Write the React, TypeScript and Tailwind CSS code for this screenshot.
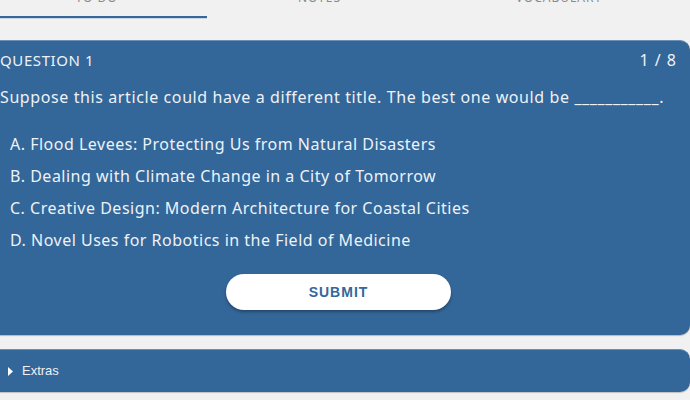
import React from "react";

const options = [
  "A. Flood Levees: Protecting Us from Natural Disasters",
  "B. Dealing with Climate Change in a City of Tomorrow",
  "C. Creative Design: Modern Architecture for Coastal Cities",
  "D. Novel Uses for Robotics in the Field of Medicine",
];

const tabs = [
  { label: "TO DO", w: "w-[223px]" },
  { label: "NOTES", w: "w-[223px]" },
  { label: "VOCABULARY", w: "w-[256px]" },
];

export default function App() {
  return (
    <div
      className="w-[690px] h-[400px] overflow-hidden bg-[#f1f1f1]"
      style={{ fontFamily: '"Noto Sans", "Open Sans", sans-serif' }}
    >
      {/* tab strip, scrolled partly out of view */}
      <div className="flex -mt-[10px] -ml-[15px]">
        {tabs.map((t, i) => (
          <div key={t.label} className={`${t.w} flex flex-col`}>
            <div className="h-[26px] text-center text-[12px] leading-[16px] tracking-[1px] text-[#8a8a8a]">
              {t.label}
            </div>
            <div
              className={
                i === 0
                  ? "ml-[15px] w-[207px] h-[2px] bg-[#3a6799] shadow-[0_1px_0_#c9d6e4]"
                  : "h-[2px]"
              }
            />
          </div>
        ))}
      </div>

      {/* question card */}
      <div className="mt-[22px] -ml-[13px] w-[703px] rounded-[10px] bg-[#336699] border-t border-[#6a8fb6] px-[13px] pt-[9px] pb-[25px] text-[#eef2f7] shadow-[0_1px_1px_rgba(0,0,0,0.25)]">
        <div className="flex justify-between text-[15px] leading-[20px]">
          <span className="tracking-[0.6px]">QUESTION 1</span>
          <span className="tracking-[1px] text-[16px]">1 / 8</span>
        </div>
        <div className="mt-[15px] text-[16px] leading-[24px] tracking-[0.6px]">
          Suppose this article could have a different title. The best one would be{" "}
          <span>___________</span>.
        </div>
        <div className="mt-[19px] pl-[10px] flex flex-col">
          {options.map((o) => (
            <div key={o} className="h-[32px] leading-[32px] text-[16px] tracking-[0.5px]">
              {o}
            </div>
          ))}
        </div>
        <div className="mt-[18px] flex justify-center">
          <button
            className="w-[225px] h-[36px] rounded-full bg-white text-[#34679a] text-[14px] font-bold tracking-[1px] shadow-[0_2px_3px_rgba(0,0,0,0.3)]"
            style={{ fontFamily: '"Liberation Sans", Arial, sans-serif' }}
          >
            SUBMIT
          </button>
        </div>
      </div>

      {/* collapsible extras */}
      <div className="mt-[14px] -ml-[13px] w-[703px] h-[43px] rounded-[10px] bg-[#336699] border-t border-[#6a8fb6] shadow-[0_1px_1px_rgba(0,0,0,0.2)] flex items-center pl-[21px] text-[#eef2f7]">
        <svg width="5" height="9" viewBox="0 0 5 9" className="mr-[9px]">
          <path d="M0 0 L5 4.5 L0 9 Z" fill="#ffffff" />
        </svg>
        <span
          className="text-[13px]"
          style={{ fontFamily: '"Liberation Sans", Arial, sans-serif' }}
        >
          Extras
        </span>
      </div>
    </div>
  );
}
